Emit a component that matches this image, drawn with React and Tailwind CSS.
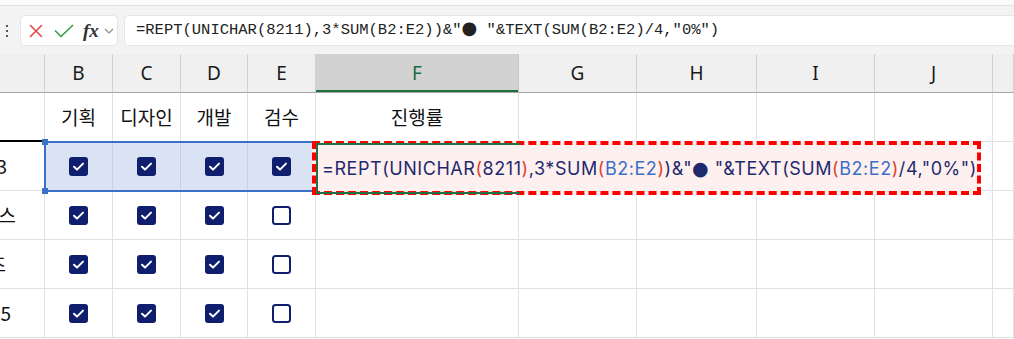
import React from "react";

const COLS = "grid-cols-[45px_68px_68px_67px_68px_203px_118px_120px_118px_118px_1fr]";

function Checked() {
  return (
    <svg width="19" height="19" viewBox="0 0 19 19">
      <rect x="0" y="0" width="19" height="19" rx="3" fill="#0f1f6e" />
      <path d="M5 9.8 L8 12.6 L14 6.6" fill="none" stroke="#ffffff" strokeWidth="2" strokeLinecap="round" strokeLinejoin="round" />
    </svg>
  );
}

function Unchecked() {
  return (
    <svg width="19" height="19" viewBox="0 0 19 19">
      <rect x="1" y="1" width="17" height="17" rx="2.5" fill="#ffffff" stroke="#0f1f6e" strokeWidth="2" />
    </svg>
  );
}

const korean = { fontFamily: '"Noto Sans CJK KR", "Noto Sans", sans-serif' };
const latin = { fontFamily: '"Noto Sans", "Open Sans", sans-serif' };
const inter = { fontFamily: 'Inter, "Noto Sans", sans-serif' };
const dot = { fontFamily: '"DejaVu Sans", sans-serif' };

function Cell({ children, className = "" }) {
  return (
    <div className={"border-r border-b border-[#e1e1e1] flex items-center justify-center overflow-hidden " + className}>
      {children}
    </div>
  );
}

function ACell({ text, pr }) {
  return (
    <div className="border-r border-b border-[#e1e1e1] overflow-hidden relative flex items-center justify-end">
      <span className={"whitespace-nowrap text-[19px] text-[#111] " + pr} style={korean}>{text}</span>
    </div>
  );
}

export default function App() {
  const headers = ["", "B", "C", "D", "E", "F", "G", "H", "I", "J", ""];
  const rows = [
    { a: "과제3", pr: "pr-[37px]", v: [1, 1, 1, 1] },
    { a: "클래스", pr: "pr-[28px]", v: [1, 1, 1, 0] },
    { a: "퀴즈", pr: "pr-[38px]", v: [1, 1, 1, 0] },
    { a: "과제5", pr: "pr-[33px]", v: [1, 1, 1, 0] },
  ];
  return (
    <div className="w-[1014px] h-[339px] overflow-hidden bg-white">
      {/* Formula bar */}
      <div className="h-[54px] bg-[#f3f3f3]">
        <div className="h-[6px] bg-[#fbfbfb] border-b border-[#e2e2e2]" />
        <div className="flex items-center pt-[9px] h-[40px]">
          <div className="w-[20px] h-[31px] flex flex-col items-center justify-center gap-[3px]">
            <div className="w-[2px] h-[2px] bg-[#555] -ml-[6px]" />
            <div className="w-[2px] h-[2px] bg-[#555] -ml-[6px]" />
            <div className="w-[2px] h-[2px] bg-[#555] -ml-[6px]" />
          </div>
          <div className="w-[98px] h-[31px] bg-white rounded-[5px] border border-[#e6e6e6] flex items-center">
            <svg width="14" height="14" viewBox="0 0 14 14" className="ml-[8px]">
              <path d="M1.5 1.5 L12.5 12.5 M12.5 1.5 L1.5 12.5" stroke="#e64545" strokeWidth="1.6" strokeLinecap="round" />
            </svg>
            <svg width="20" height="14" viewBox="0 0 20 14" className="ml-[11px]">
              <path d="M1.5 7 L7 12.5 L18.5 1.5" fill="none" stroke="#3c9e4c" strokeWidth="1.7" strokeLinecap="round" strokeLinejoin="round" />
            </svg>
            <span className="ml-[9px] text-[19px] italic font-bold text-[#333] leading-none" style={{ fontFamily: '"Liberation Serif", "DejaVu Serif", serif' }}>fx</span>
            <svg width="10" height="6" viewBox="0 0 10 6" className="ml-[5px]">
              <path d="M1 1 L5 5 L9 1" fill="none" stroke="#8a8a8a" strokeWidth="1.2" />
            </svg>
          </div>
          <div className="ml-[6px] flex-1 h-[31px] bg-white rounded-l-[5px] border border-r-0 border-[#e6e6e6] flex items-center pl-[11px]">
            <span className="text-[15.5px] text-[#222] whitespace-nowrap" style={{ fontFamily: '"Liberation Mono", "DejaVu Sans Mono", monospace' }}>
              =REPT(UNICHAR(8211),3*SUM(B2:E2))&amp;"<span className="text-[18px] leading-none" style={dot}>●</span> "&amp;TEXT(SUM(B2:E2)/4,"0%")
            </span>
          </div>
        </div>
      </div>

      {/* Sheet */}
      <div className="relative">
        <div className={"grid " + COLS}>
          {headers.map((h, i) => (
            <div
              key={"h" + i}
              className={
                "h-[39px] border-b border-[#a6a6a6] flex items-center justify-center text-[19px] " +
                (h === "F"
                  ? "bg-[#d2d2d2] border-r border-r-[#c4c4c4] text-[#1c6b3a] shadow-[inset_0_-2px_0_#1e6e3e]"
                  : "bg-[#f0f0f0] border-r border-r-[#d0d0d0] text-[#1a1a1a]")
              }
              style={latin}
            >
              {h}
            </div>
          ))}

          {/* Row 1 */}
          <div className="h-[49px] border-r border-b border-[#e1e1e1] relative">
            <div className="absolute left-0 bottom-[-1px] w-[42px] h-[2px] bg-black" />
          </div>
          {["기획", "디자인", "개발", "검수", "진행률"].map((t) => (
            <Cell key={t}>
              <span className="text-[19px] text-[#111]" style={korean}>{t}</span>
            </Cell>
          ))}
          <Cell /><Cell /><Cell /><Cell /><Cell />

          {rows.map((r, ri) => (
            <React.Fragment key={ri}>
              <ACell text={r.a} pr={r.pr} />
              {r.v.map((v, vi) => (
                <div
                  key={vi}
                  className={
                    "h-[49px] border-b flex items-center justify-center " +
                    (ri === 0 ? "bg-[#dae3f3] border-r border-[#c6cfdf]" : "border-r border-[#e1e1e1]")
                  }
                >
                  {v ? <Checked /> : <Unchecked />}
                </div>
              ))}
              <Cell /><Cell /><Cell /><Cell /><Cell /><Cell />
            </React.Fragment>
          ))}
        </div>

        {/* Selection B2:E2 */}
        <div className="absolute left-[44px] top-[87px] w-[272px] h-[51px] border-2 border-[#3b70c8] pointer-events-none" />
        <div className="absolute left-[42px] top-[85px] w-[6px] h-[6px] bg-[#3b70c8]" />
        <div className="absolute left-[42px] top-[134px] w-[6px] h-[6px] bg-[#3b70c8]" />

        {/* Annotated F2 */}
        <div className="absolute left-[312px] top-[87px] w-[669px] h-[54px] border-4 border-dashed border-[#ff0000] bg-[#fff0f0] flex items-center">
          <div className="absolute left-0 top-[-2px] w-[204px] h-[51px] border-2 border-r-0 border-[#1e7145]" />
          <span className="relative pl-[6px] text-[18px] tracking-[0.55px] whitespace-nowrap text-[#1f2a6e]" style={inter}>
            =REPT(UNICHAR<span className="text-[#d9452b]">(</span>8211<span className="text-[#d9452b]">)</span>,3*SUM<span className="text-[#d9452b]">(</span><span className="text-[#3b6fc6]">B2:E2</span><span className="text-[#d9452b]">)</span>)&amp;"<span className="text-[19px] leading-none" style={dot}>●</span> "&amp;TEXT(SUM<span className="text-[#d9452b]">(</span><span className="text-[#3b6fc6]">B2:E2</span><span className="text-[#d9452b]">)</span>/4,"0%")
          </span>
        </div>
      </div>
    </div>
  );
}
